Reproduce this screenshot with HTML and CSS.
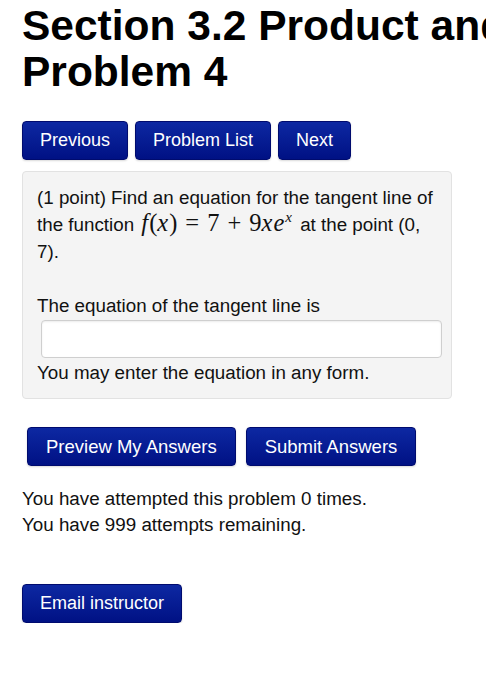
FILE: index.html
```html
<!DOCTYPE html>
<html lang="en">
<head>
<meta charset="utf-8">
<title>Section 3.2 Product and Quotient Rules: Problem 4</title>
<link rel="stylesheet" href="styles.css">
</head>
<body>
<div class="page">
  <h1 class="title">
    <span class="title-line">Section 3.2 Product and Quotient Rules:</span>
    <span class="title-line">Problem 4</span>
  </h1>

  <nav class="nav">
    <a class="btn" href="#">Previous</a>
    <a class="btn" href="#">Problem List</a>
    <a class="btn" href="#">Next</a>
  </nav>

  <div class="problem">
    <p class="statement">(1 point) Find an equation for the tangent line of the function <span class="math"><i>f</i>(<i>x</i>)<span class="op">=</span>7<span class="op">+</span>9<i>x</i><i>e</i><sup><i>x</i></sup></span> at the point (0, 7).</p>
    <p class="answer">The equation of the tangent line is<br>
      <input class="answer-input" type="text" aria-label="Answer"><br>
      You may enter the equation in any form.</p>
  </div>

  <div class="submit-row">
    <button class="btn btn-lg" type="button">Preview My Answers</button>
    <button class="btn btn-lg" type="button">Submit Answers</button>
  </div>

  <div class="attempts">
    <p>You have attempted this problem 0 times.</p>
    <p>You have 999 attempts remaining.</p>
  </div>

  <div class="email-row">
    <a class="btn" href="#">Email instructor</a>
  </div>
</div>
</body>
</html>
```

FILE: styles.css
```css
html, body {
  margin: 0;
  padding: 0;
  background: #ffffff;
  overflow: hidden;
}

body {
  font-family: "Liberation Sans", Arial, Helvetica, sans-serif;
  color: #111111;
  font-size: 18.8px;
  line-height: 27px;
}

.page {
  padding: 0 0 0 22px;
}

.title {
  margin: 0;
  padding-top: 3px;
  font-size: 42.5px;
  line-height: 46px;
  font-weight: bold;
  color: #000000;
  display: flex;
  flex-direction: column;
}

.title-line {
  white-space: nowrap;
}

.nav {
  display: flex;
  gap: 7px;
  margin-top: 26px;
}

.btn {
  display: inline-flex;
  align-items: center;
  justify-content: center;
  box-sizing: border-box;
  height: 39px;
  padding: 0 17px;
  border: 1px solid #000b6e;
  border-radius: 4px;
  background: linear-gradient(to bottom, #0d28a2 0%, #001184 100%);
  color: #ffffff;
  font-family: "Liberation Sans", Arial, Helvetica, sans-serif;
  font-size: 18px;
  text-decoration: none;
  box-shadow: 0 1px 2px rgba(0, 0, 0, 0.15);
}

.btn-lg {
  font-size: 18.5px;
  padding: 0 18px;
}

.problem {
  box-sizing: border-box;
  width: 430px;
  margin-top: 11px;
  padding: 12px 14px 12px 14px;
  background: #f4f4f4;
  border: 1px solid #e2e2e2;
  border-radius: 4px;
}

.problem p {
  margin: 0;
}

.statement {
  margin-bottom: 27px !important;
}

/* inline formula, set in a serif italic like typeset math */
.math {
  font-family: "Liberation Serif", "Times New Roman", serif;
  font-size: 24.5px;
  line-height: 18px;
  white-space: nowrap;
  margin-left: 2px;
  margin-right: 2px;
}

.math i {
  font-style: italic;
  padding-right: 1px;
}

.math .op {
  padding: 0 8px;
}

.math sup {
  font-size: 15px;
  line-height: 0;
  vertical-align: 9px;
}

.answer-input {
  box-sizing: border-box;
  width: 401px;
  height: 38px;
  margin: 1px 0 1px 4px;
  vertical-align: middle;
  background: #ffffff;
  border: 1px solid #cfcfcf;
  border-radius: 4px;
  box-shadow: inset 0 1px 2px rgba(0, 0, 0, 0.08);
}

.submit-row {
  display: flex;
  gap: 10px;
  margin-top: 28px;
  padding-left: 5px;
}

.attempts {
  margin-top: 20px;
  line-height: 26px;
}

.attempts p {
  margin: 0;
}

.email-row {
  display: flex;
  margin-top: 46px;
}
```
